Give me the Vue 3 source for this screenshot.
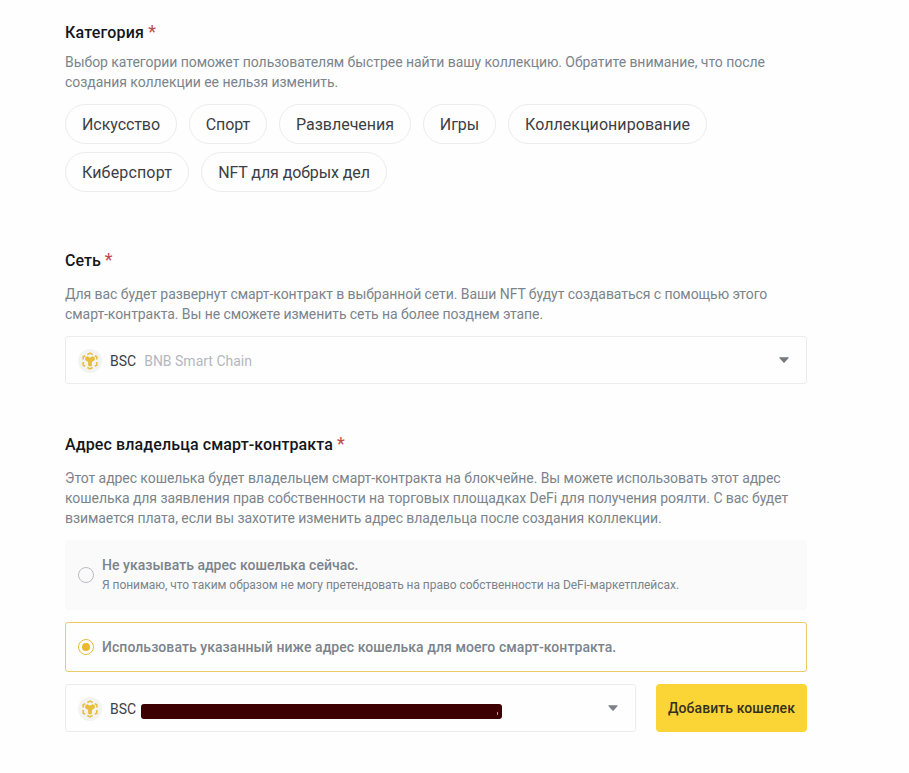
<script setup>
import { ref } from 'vue'

const categories = [
  { label: 'Искусство', width: 112, spacing: -0.07 },
  { label: 'Спорт', width: 78, spacing: -0.08 },
  { label: 'Развлечения', width: 132, spacing: 0 },
  { label: 'Игры', width: 73, spacing: -0.05 },
  { label: 'Коллекционирование', width: 199, spacing: 0.06 },
  { label: 'Киберспорт', width: 124, spacing: 0.16 },
  { label: 'NFT для добрых дел', width: 186, spacing: -0.1 },
]
const selected = ref('own')
</script>

<template>
  <main class="form">
    <section class="category">
      <h2 class="title t1">Категория <span class="req">*</span></h2>
      <p class="desc d1">
        Выбор категории поможет пользователям быстрее найти вашу коллекцию. Обратите внимание, что после<br />
        создания коллекции ее нельзя изменить.
      </p>
      <div class="chips">
        <button
          v-for="c in categories"
          :key="c.label"
          class="chip"
          :style="{ width: c.width + 'px', letterSpacing: c.spacing + 'px' }"
        >{{ c.label }}</button>
      </div>
    </section>

    <section class="network">
      <h2 class="title t2">Сеть <span class="req">*</span></h2>
      <p class="desc d2">
        Для вас будет развернут смарт-контракт в выбранной сети. Ваши NFT будут создаваться с помощью этого<br />
        смарт-контракта. Вы не сможете изменить сеть на более позднем этапе.
      </p>
      <div class="select">
        <svg class="coin" viewBox="0 0 24 24">
          <circle cx="12" cy="12" r="12" fill="#f3f3f2" />
          <path d="M9.3 5.6 12 4.1l2.7 1.5M16.8 6.7l2 1.1v2.8M18.8 13v3.2l-2 1.1M14.7 18.4 12 19.9l-2.7-1.5M7.2 17.3l-2-1.1V13M5.2 10.6V7.8l2-1.1" fill="none" stroke="#e6c04a" stroke-width="1.7" />
          <path d="M7.2 8.5 9.4 7.3 12 8.7l2.6-1.4 2.2 1.2v2.6L13.9 13v3.6L12 17.7l-1.9-1.1V13l-2.9-1.9z" fill="#e6bd3c" />
        </svg>
        <span class="code">BSC</span>
        <span class="chain">BNB Smart Chain</span>
        <svg class="caret" viewBox="0 0 10 6"><path d="M.8.3h8.4a.5.5 0 0 1 .4.8L5.6 5.6a.8.8 0 0 1-1.2 0L.4 1.1A.5.5 0 0 1 .8.3z" fill="#76797d" /></svg>
      </div>
    </section>

    <section class="owner">
      <h2 class="title t3">Адрес владельца смарт-контракта <span class="req">*</span></h2>
      <p class="desc d3">
        Этот адрес кошелька будет владельцем смарт-контракта на блокчейне. Вы можете использовать этот адрес<br />
        кошелька для заявления прав собственности на торговых площадках DeFi для получения роялти. С вас будет<br />
        взимается плата, если вы захотите изменить адрес владельца после создания коллекции.
      </p>
      <div class="option plain" @click="selected = 'none'">
        <span class="radio" :class="{ on: selected === 'none' }"></span>
        <div>
          <div class="label l1">Не указывать адрес кошелька сейчас.</div>
          <div class="note">Я понимаю, что таким образом не могу претендовать на право собственности на DeFi-маркетплейсах.</div>
        </div>
      </div>
      <div class="option outlined" @click="selected = 'own'">
        <span class="radio" :class="{ on: selected === 'own' }"></span>
        <div class="label l2">Использовать указанный ниже адрес кошелька для моего смарт-контракта.</div>
      </div>
      <div class="wallet">
        <div class="select">
          <svg class="coin" viewBox="0 0 24 24">
            <circle cx="12" cy="12" r="12" fill="#f3f3f2" />
            <path d="M9.3 5.6 12 4.1l2.7 1.5M16.8 6.7l2 1.1v2.8M18.8 13v3.2l-2 1.1M14.7 18.4 12 19.9l-2.7-1.5M7.2 17.3l-2-1.1V13M5.2 10.6V7.8l2-1.1" fill="none" stroke="#e6c04a" stroke-width="1.7" />
            <path d="M7.2 8.5 9.4 7.3 12 8.7l2.6-1.4 2.2 1.2v2.6L13.9 13v3.6L12 17.7l-1.9-1.1V13l-2.9-1.9z" fill="#e6bd3c" />
          </svg>
          <span class="code">BSC</span>
          <span class="redacted"></span>
          <svg class="caret" viewBox="0 0 10 6"><path d="M.8.3h8.4a.5.5 0 0 1 .4.8L5.6 5.6a.8.8 0 0 1-1.2 0L.4 1.1A.5.5 0 0 1 .8.3z" fill="#7b818a" /></svg>
        </div>
        <button class="add">Добавить кошелек</button>
      </div>
    </section>
  </main>
</template>

<style>
body {
  background: #fefefe;
}
</style>

<style scoped>
.form {
  box-sizing: border-box;
  width: 807px;
  height: 773px;
  padding: 20px 0 0 65px;
  font-family: Roboto, "Noto Sans", sans-serif;
  overflow: hidden;
}
.title {
  height: 24px;
  margin: 0;
  font-size: 16px;
  line-height: 26px;
  font-weight: 500;
  color: #14161a;
}
.t1 { letter-spacing: 0.18px; }
.t2 { letter-spacing: 0.02px; }
.t3 { letter-spacing: 0.116px; }
.req {
  color: #b84a50;
  font-size: 18px;
  line-height: 20px;
  font-weight: 400;
}
.desc {
  margin: 0;
  font-size: 14px;
  line-height: 20px;
  color: #7b848b;
  white-space: nowrap;
}
.d1 { margin-top: 8px; letter-spacing: -0.052px; }
.d2 { margin-top: 12px; letter-spacing: -0.066px; }
.d3 { margin-top: 12px; letter-spacing: -0.064px; }
.chips {
  display: flex;
  flex-wrap: wrap;
  gap: 8px 12px;
  margin-top: 12px;
}
.chip {
  box-sizing: border-box;
  height: 40px;
  padding: 2px 0 0;
  border: 1px solid #ebecee;
  border-radius: 20px;
  background: transparent;
  font: 400 16px/24px Roboto, "Noto Sans", sans-serif;
  color: #3b3e44;
  white-space: nowrap;
}
.network { margin-top: 56px; }
.owner { margin-top: 48px; }
.select {
  box-sizing: border-box;
  display: flex;
  align-items: center;
  height: 48px;
  padding: 0 17px 0 12px;
  border: 1px solid #ebecee;
  border-radius: 3px;
  font-size: 14px;
  line-height: 20px;
}
.network .select { margin-top: 12px; }
.coin {
  width: 24px;
  height: 24px;
  margin-top: 2px;
}
.code {
  margin: 2px 0 0 8px;
  color: #3b3e44;
}
.chain {
  margin: 2px 0 0 8px;
  color: #b4b8be;
}
.caret {
  width: 10px;
  height: 6px;
  margin-left: auto;
}
.option {
  box-sizing: border-box;
  display: flex;
  align-items: center;
  gap: 8px;
  margin-top: 12px;
  border-radius: 3px;
}
.plain {
  height: 70px;
  padding: 0 13px;
  background: #fafafa;
}
.outlined {
  height: 50px;
  padding: 0 12px;
  border: 1px solid #eacb68;
}
.radio {
  box-sizing: border-box;
  display: flex;
  align-items: center;
  justify-content: center;
  width: 16px;
  height: 16px;
  border: 1px solid #b9bcc1;
  border-radius: 50%;
}
.radio.on { border-color: #e6bd38; }
.radio.on::after {
  content: "";
  width: 8px;
  height: 8px;
  border-radius: 50%;
  background: #e8b92c;
}
.label {
  font-size: 14px;
  line-height: 20px;
  font-weight: 500;
  color: #7b848d;
  white-space: nowrap;
}
.l1 { letter-spacing: 0.03px; }
.l2 { letter-spacing: 0.065px; }
.note {
  font-size: 12px;
  line-height: 20px;
  letter-spacing: -0.039px;
  color: #7b848b;
  white-space: nowrap;
}
.wallet {
  display: flex;
  gap: 20px;
  margin-top: 12px;
}
.wallet .select { flex: 1; }
.redacted {
  display: flex;
  align-items: flex-end;
  justify-content: flex-end;
  box-sizing: border-box;
  width: 361px;
  height: 15px;
  margin: 7px 0 0 5px;
  padding: 0 4px 4px 0;
  border-radius: 3px;
  background: #3d0002;
}
.redacted::after {
  content: "";
  width: 1px;
  height: 3px;
  background: #b79a9b;
}
.add {
  width: 151px;
  height: 48px;
  padding: 0;
  border: 0;
  border-radius: 4px;
  background: #fbd535;
  font: 500 14px/20px Roboto, "Noto Sans", sans-serif;
  letter-spacing: 0.09px;
  color: #352f22;
  white-space: nowrap;
}
</style>
